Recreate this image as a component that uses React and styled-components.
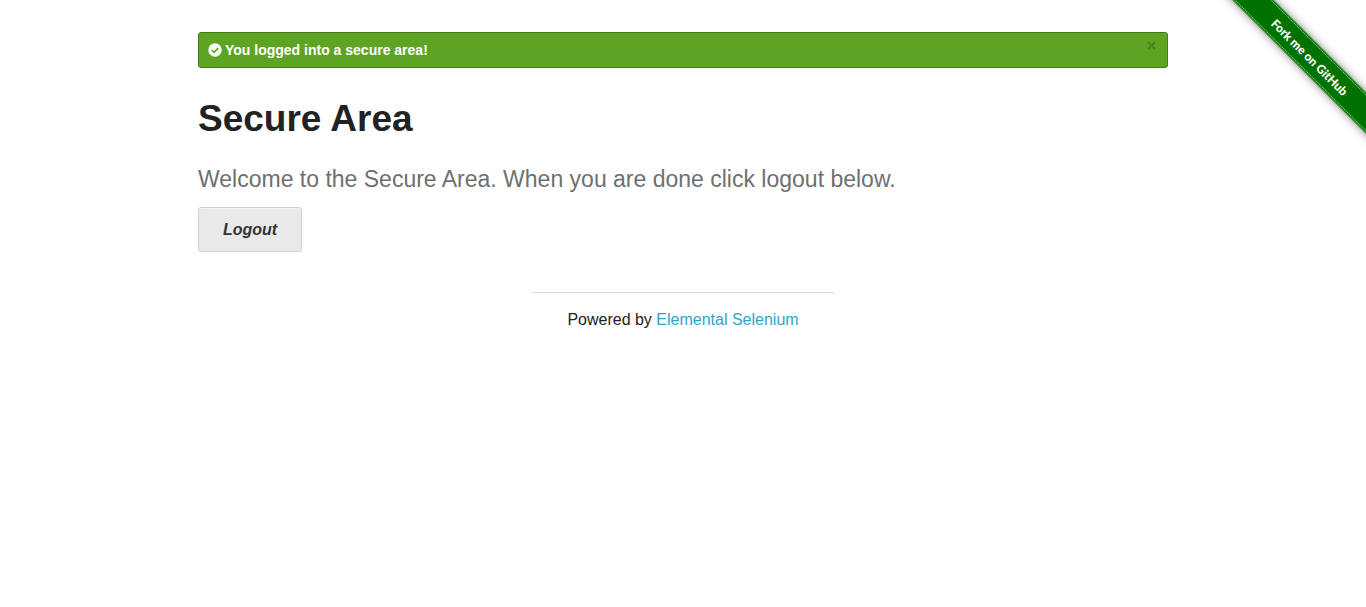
import React, { useState } from "react";
import styled, { createGlobalStyle } from "styled-components";

const GlobalStyle = createGlobalStyle`
  *, *::before, *::after { box-sizing: border-box; }
  body {
    margin: 0;
    background: #fff;
    color: #222;
    font-family: "Liberation Sans", Arial, sans-serif;
    font-size: 16px;
    line-height: 24px;
    overflow-x: hidden;
  }
`;

const Page = styled.div`
  position: relative;
  display: flex;
  flex-direction: column;
  gap: 40px;
  padding-top: 32px;
`;

const Row = styled.div`
  width: 100%;
  max-width: 1000px;
  margin: 0 auto;
  padding: 0 15px;
`;

const Alert = styled.div`
  display: flex;
  align-items: center;
  justify-content: space-between;
  height: 36px;
  margin-bottom: 23px;
  padding: 0 9px;
  border: 1px solid #457a1a;
  border-radius: 3px;
  background: #5da423;
  color: #fff;
  font-size: 14px;
  font-weight: bold;
  line-height: 14px;
`;

const Message = styled.span`
  display: flex;
  align-items: center;
  gap: 3px;
`;

const Close = styled.button`
  display: flex;
  margin: 0 0 10px;
  padding: 2px;
  border: 0;
  background: none;
  color: #3f7018;
  cursor: pointer;
`;

const Title = styled.h1`
  margin: 0 0 18px;
  font-size: 37px;
  font-weight: bold;
  line-height: 56px;
`;

const Subheader = styled.h4`
  margin: 0 0 13px;
  color: #6f6f6f;
  font-size: 23px;
  font-weight: normal;
  line-height: 29px;
`;

const LogoutButton = styled.button`
  display: block;
  height: 45px;
  padding: 0 24px;
  border: 1px solid #d0d0d0;
  border-radius: 3px;
  background: #e9e9e9;
  box-shadow: inset 0 1px 0 rgba(255, 255, 255, 0.5);
  color: #333;
  font-family: inherit;
  font-size: 16px;
  font-style: italic;
  font-weight: bold;
  cursor: pointer;
`;

const Footer = styled.footer`
  width: 100%;
  max-width: 304px;
  margin: 0 auto;
  padding-top: 15px;
  border-top: 1px solid #ddd;
  text-align: center;
`;

const FooterLink = styled.a`
  color: #2ba6cb;
  text-decoration: none;
`;

const RibbonLink = styled.a`
  position: absolute;
  top: 0;
  right: 0;
  display: block;
  width: 149px;
  height: 149px;
`;

const RibbonArt = styled.svg`
  display: block;
  text {
    fill: #fff;
    font-family: Lato, sans-serif;
    font-size: 12px;
    font-weight: 900;
  }
`;

function CheckIcon() {
  return (
    <svg width="14" height="14" viewBox="0 0 14 14" aria-hidden="true">
      <circle cx="7" cy="7" r="6.7" fill="#fff" />
      <path d="M3.7 7l2.3 2.3 4.3-4.2" fill="none" stroke="#5da423" strokeWidth="1.6" />
    </svg>
  );
}

function CloseIcon() {
  return (
    <svg width="9" height="9" viewBox="0 0 9 9" aria-hidden="true">
      <path d="M1 1l7 7M8 1L1 8" stroke="currentColor" strokeWidth="2" opacity="0.65" />
    </svg>
  );
}

function Ribbon() {
  return (
    <RibbonLink href="https://github.com/tourdedave/the-internet" aria-label="Fork me on GitHub">
      <RibbonArt width="149" height="149" viewBox="0 0 149 149">
        <defs>
          <filter id="band-shadow" x="-20%" y="-100%" width="140%" height="300%">
            <feDropShadow dx="0" dy="0" stdDeviation="4" floodColor="#000" floodOpacity="0.5" />
          </filter>
        </defs>
        <g transform="translate(93 57) rotate(45)">
          <rect x="-130" y="-14.5" width="260" height="29" fill="#007200" filter="url(#band-shadow)" />
          <path
            d="M-130 -12.7H130M-130 12.7H130"
            stroke="#7fc07f"
            strokeWidth="1"
            strokeDasharray="1.4 0.7"
          />
          <text x="0" y="5" textAnchor="middle">Fork me on GitHub</text>
        </g>
      </RibbonArt>
    </RibbonLink>
  );
}

export default function App() {
  const [open, setOpen] = useState(true);
  return (
    <>
      <GlobalStyle />
      <Page>
        <Row as="main">
          {open && (
            <Alert role="status">
              <Message>
                <CheckIcon />
                You logged into a secure area!
              </Message>
              <Close type="button" aria-label="Close" onClick={() => setOpen(false)}>
                <CloseIcon />
              </Close>
            </Alert>
          )}
          <Title>Secure Area</Title>
          <Subheader>Welcome to the Secure Area. When you are done click logout below.</Subheader>
          <LogoutButton type="button">Logout</LogoutButton>
        </Row>
        <Footer>
          Powered by <FooterLink href="http://elementalselenium.com/">Elemental Selenium</FooterLink>
        </Footer>
        <Ribbon />
      </Page>
    </>
  );
}
